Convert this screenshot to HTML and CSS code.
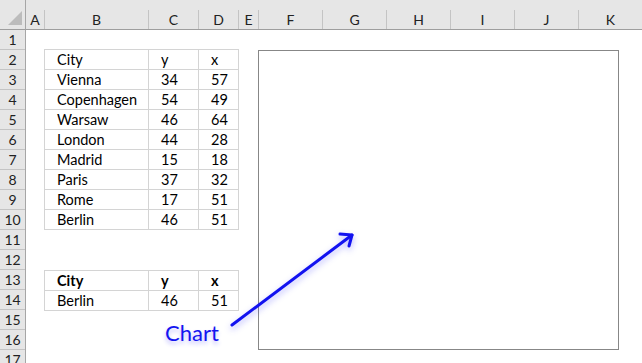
FILE: index.html
```html
<!DOCTYPE html>
<html lang="en">
<head>
  <meta charset="UTF-8">
  <title>Sheet</title>
  <link rel="stylesheet" href="styles.css">
</head>
<body>
  <div class="sheet">
    <div class="corner"><span class="corner-tri"></span></div>

    <div class="col-heads">
      <div class="ch w-a">A</div>
      <div class="ch w-b">B</div>
      <div class="ch w-c">C</div>
      <div class="ch w-d">D</div>
      <div class="ch w-e">E</div>
      <div class="ch w-f">F</div>
      <div class="ch w-f">G</div>
      <div class="ch w-f">H</div>
      <div class="ch w-f">I</div>
      <div class="ch w-f">J</div>
      <div class="ch w-f">K</div>
    </div>

    <div class="row-heads">
      <div class="rh">1</div>
      <div class="rh">2</div>
      <div class="rh">3</div>
      <div class="rh">4</div>
      <div class="rh">5</div>
      <div class="rh">6</div>
      <div class="rh">7</div>
      <div class="rh">8</div>
      <div class="rh">9</div>
      <div class="rh">10</div>
      <div class="rh">11</div>
      <div class="rh">12</div>
      <div class="rh">13</div>
      <div class="rh">14</div>
      <div class="rh">15</div>
      <div class="rh">16</div>
      <div class="rh">17</div>
    </div>

    <div class="cells">
      <div class="tables">
        <table class="data">
          <tr><td>City</td><td>y</td><td>x</td></tr>
          <tr><td>Vienna</td><td>34</td><td>57</td></tr>
          <tr><td>Copenhagen</td><td>54</td><td>49</td></tr>
          <tr><td>Warsaw</td><td>46</td><td>64</td></tr>
          <tr><td>London</td><td>44</td><td>28</td></tr>
          <tr><td>Madrid</td><td>15</td><td>18</td></tr>
          <tr><td>Paris</td><td>37</td><td>32</td></tr>
          <tr><td>Rome</td><td>17</td><td>51</td></tr>
          <tr><td>Berlin</td><td>46</td><td>51</td></tr>
        </table>

        <table class="data lookup">
          <tr class="bold"><td>City</td><td>y</td><td>x</td></tr>
          <tr><td>Berlin</td><td>46</td><td>51</td></tr>
        </table>
      </div>

      <div class="chart"></div>
    </div>

    <!-- annotation drawn over the sheet -->
    <svg class="arrow" width="140" height="110" viewBox="0 0 140 110">
      <g fill="none" stroke="#1212f0" stroke-width="3" stroke-linecap="round" stroke-linejoin="round">
        <line x1="6" y1="97" x2="126" y2="7"/>
        <polyline points="114,6 126,7 123,18"/>
      </g>
    </svg>
    <div class="label">Chart</div>
  </div>
</body>
</html>
```

FILE: styles.css
```css
* {
  margin: 0;
  padding: 0;
  box-sizing: border-box;
}

body {
  background: #fff;
  font-family: Lato, "Open Sans", sans-serif;
  font-size: 14.5px;
  color: #000;
  overflow: hidden;
}

.sheet {
  position: relative;
  display: grid;
  grid-template-columns: 26px 1fr;
  grid-template-rows: 30px 1fr;
  width: 642px;
  height: 363px;
}

/* headers */
.corner {
  position: relative;
  background: #e6e6e6;
  border-right: 1px solid #a6a6a6;
  border-bottom: 1px solid #9e9e9e;
}

.corner-tri {
  position: absolute;
  right: 3px;
  bottom: 4px;
  width: 0;
  height: 0;
  border-left: 14px solid transparent;
  border-bottom: 14px solid #bcbcbc;
}

.col-heads {
  display: flex;
  background: #e6e6e6;
  border-bottom: 1px solid #9e9e9e;
  padding-top: 10px;
}

.ch {
  flex: none;
  height: 19px;
  line-height: 19px;
  text-align: center;
  font-size: 14px;
  color: #222;
  border-right: 1px solid #c4c4c4;
}

.w-a { width: 19px; }
.w-b { width: 104px; }
.w-c { width: 50px; }
.w-d { width: 40px; }
.w-e { width: 20px; }
.w-f { width: 64px; }

.row-heads {
  display: flex;
  flex-direction: column;
  background: #e6e6e6;
  border-right: 1px solid #a6a6a6;
}

.rh {
  flex: none;
  height: 20px;
  line-height: 19px;
  text-align: center;
  font-size: 14px;
  color: #222;
  border-bottom: 1px solid #c4c4c4;
}

/* body */
.cells {
  display: flex;
  align-items: flex-start;
  padding-top: 19px;
  padding-left: 18px;
  gap: 19px;
}

.tables {
  display: flex;
  flex-direction: column;
  gap: 40px;
}

.data {
  border-collapse: collapse;
  table-layout: fixed;
  width: 195px;
}

.data td {
  height: 20px;
  padding: 0 0 0 12px;
  line-height: 19px;
  border: 1px solid #d4d4d4;
  white-space: nowrap;
}

.data td:nth-child(1) { width: 104px; }
.data td:nth-child(2) { width: 50px; }
.data td:nth-child(3) { width: 40px; }

.bold td {
  font-weight: 700;
}

.chart {
  flex: none;
  width: 361px;
  height: 300px;
  margin-top: 1px;
  border: 1px solid #878787;
  background: #fff;
}

/* annotation */
.arrow {
  position: absolute;
  left: 226px;
  top: 228px;
  overflow: visible;
  filter: drop-shadow(0 3px 3px rgba(40, 40, 255, 0.35));
}

.label {
  position: absolute;
  left: 165px;
  top: 319px;
  font-size: 22px;
  color: #1414f0;
  text-shadow: 0 3px 4px rgba(40, 40, 255, 0.3);
}
```
